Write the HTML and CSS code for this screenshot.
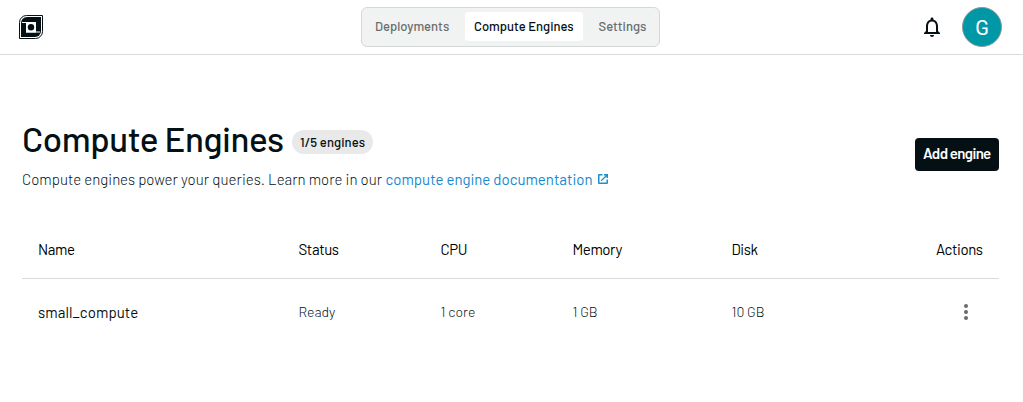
FILE: index.html
```html
<!DOCTYPE html>
<html lang="en">
<head>
<meta charset="utf-8">
<title>Compute Engines</title>
<link rel="stylesheet" href="styles.css">
</head>
<body>
<header class="topbar">
  <a class="logo" aria-label="Home">
    <svg width="24" height="24" viewBox="0 0 24 24">
      <path d="M7.500 .5H23.500V16.500A7 7 0 0 1 16.500 23.500H.5V7.500A7 7 0 0 1 7.500 .5Z" fill="#fff" stroke="#041014"/>
      <path d="M8 2H22V16A6 6 0 0 1 16 22H2V8A6 6 0 0 1 8 2Z" fill="#041014"/>
      <path d="M3 7H17V8H3ZM7 16.500H21V17.500H7Z" fill="#fff"/>
      <path d="M7 7H17V17.500H7Z" fill="#fff"/>
      <circle cx="12" cy="12.200" r="3.200" fill="#041014"/>
    </svg>
  </a>
  <nav class="tabs">
    <a class="tab tab-deployments">Deployments</a>
    <a class="tab tab-active">Compute Engines</a>
    <a class="tab tab-settings">Settings</a>
  </nav>
  <div class="account">
    <svg class="bell" width="24" height="24" viewBox="0 0 24 24" fill="#041014"><path d="M12 22c1.100 0 2-.9 2-2h-4c0 1.100.9 2 2 2zm6-6v-5c0-3.070-1.630-5.640-4.500-6.320V4c0-.83-.67-1.500-1.500-1.500s-1.500.67-1.500 1.500v.68C7.640 5.360 6 7.920 6 11v5l-2 2v1h16v-1l-2-2zm-2 1H8v-6c0-2.480 1.510-4.500 4-4.500s4 2.020 4 4.500v6z"/></svg>
    <span class="avatar">G</span>
  </div>
</header>
<main class="page">
  <div class="intro">
    <div>
      <div class="title-row"><h1 class="title">Compute Engines</h1><span class="badge">1/5 engines</span></div>
      <p class="lead"><span class="lead-text">Compute engines power your queries. Learn more in our</span><a class="doc-link">compute engine documentation</a><svg class="external" width="12" height="12" viewBox="0 0 24 24" fill="#1f8fc9"><path d="M19 19H5V5h6V2H4a2 2 0 0 0-2 2v16a2 2 0 0 0 2 2h16a2 2 0 0 0 2-2v-7h-3zM14 2v3h3.200L7.500 14.700l1.800 1.800L19 6.800V10h3V2z"/></svg></p>
    </div>
    <button class="add">Add engine</button>
  </div>
  <div class="table">
    <div class="row head">
      <span class="h-name">Name</span><span class="h-status">Status</span><span class="h-cpu">CPU</span><span class="h-memory">Memory</span><span class="h-disk">Disk</span><span class="h-actions">Actions</span>
    </div>
    <div class="row body">
      <span class="engine">small_compute</span><span class="c-ready">Ready</span><span class="c-core">1 core</span><span class="c-mem">1 GB</span><span class="c-disk">10 GB</span>
      <span class="menu"><svg width="24" height="24" viewBox="0 0 24 24" fill="#6b6b6b"><circle cx="12" cy="6" r="2"/><circle cx="12" cy="12" r="2"/><circle cx="12" cy="18" r="2"/></svg></span>
    </div>
  </div>
</main>
</body>
</html>
```
FILE: styles.css
```css
* { box-sizing: border-box; }
body { margin: 0; background: #fff; color: #041014; font-family: Barlow, Roboto, sans-serif; white-space: nowrap; }
svg { display: block; }
.topbar { height: 55px; border-bottom: 1px solid #d9dada; display: grid; grid-template-columns: 361px 299px 1fr; }
.logo { padding: 15px 0 0 19px; }
.tabs { margin-top: 7px; height: 40px; padding-top: 4px; display: flex; align-items: flex-start; border: 1px solid #d5d8d8; border-radius: 6px; background: #f1f3f3; font-size: 13px; font-weight: 500; }
.tab { height: 29px; line-height: 29px; color: #686d6e; }
.tab-deployments { width: 103px; padding-left: 13px; }
.tab-active { width: 118px; padding-left: 9px; border-radius: 4px; background: #fff; color: #041014; }
.tab-settings { padding-left: 15.500px; }
.account { display: flex; justify-content: flex-end; padding: 7px 21px 0 0; }
.bell { margin: 8px 18px 0 0; }
.avatar { width: 40px; height: 40px; border: 1px solid #8c9999; border-radius: 50%; background: #0097a7; color: #fff; font: 20px/40px Roboto, sans-serif; text-align: center; }
.page { padding: 65px 24px 0 22px; }
.intro { display: flex; justify-content: space-between; }
.title-row { display: flex; height: 38px; }
.title { margin: 0; width: 270px; font-size: 35px; line-height: 36px; font-weight: 500; letter-spacing: -.45px; }
.badge { width: 81px; height: 24px; margin-top: 10px; padding-left: 8px; border-radius: 12px; background: #e9e9e9; font-size: 13px; line-height: 24px; font-weight: 500; letter-spacing: .09px; }
.lead { display: flex; margin: 11px 0 0; font-size: 15px; line-height: 20px; font-weight: 300; }
.lead-text { width: 363.500px; letter-spacing: .035px; }
.doc-link { width: 211.500px; color: #1788ce; font-weight: 400; }
.external { margin-top: 4px; }
.add { width: 84px; height: 33px; margin-top: 18px; padding: 0 0 2px 8px; border: 0; border-radius: 4px; background: #041014; color: #fff; font: 600 15px/31px Barlow, Roboto, sans-serif; letter-spacing: -.62px; text-align: left; }
.table { margin-top: 32px; }
.row { display: grid; grid-template-columns: 260.500px 142px 132px 159px 204.500px 47px; padding-left: 16px; align-items: center; }
.head { height: 58px; padding-bottom: 2px; border-bottom: 1px solid #d9dada; font-size: 15px; font-weight: 400; letter-spacing: -.4px; color: #000; }
.body { height: 65px; font-size: 14px; font-weight: 300; }
.engine { font-size: 15px; font-weight: 400; letter-spacing: .07px; }
.menu { padding-left: 18px; }
```
